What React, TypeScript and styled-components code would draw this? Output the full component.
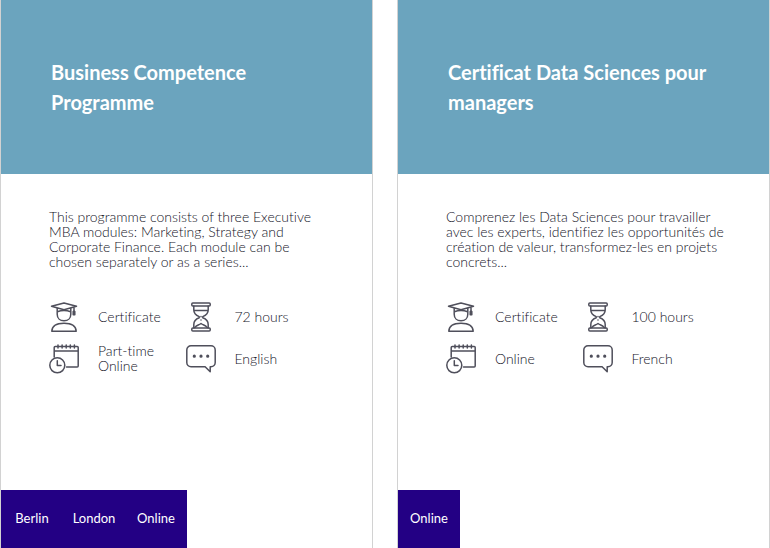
import React from "react";
import styled, { createGlobalStyle } from "styled-components";

const GlobalStyle = createGlobalStyle`
  * { box-sizing: border-box; }
  body {
    margin: 0;
    background: #fff;
    color: #14141f;
    font-family: "Lato", sans-serif;
    font-size: 14px;
    font-weight: 300;
    line-height: 15px;
    font-variant-ligatures: none;
  }
`;

const CardGrid = styled.main`
  display: grid;
  grid-template-columns: repeat(2, minmax(0, 1fr));
  gap: 24px;
  min-height: 100vh;
`;

const Card = styled.article`
  display: flex;
  flex-direction: column;
  border: solid #d2d2d2;
  border-width: 0 1px;
`;

const CardHeader = styled.header`
  min-height: 174px;
  padding: 57px 48px 57px 50px;
  background: #6ba4be;
`;

const Title = styled.h2`
  margin: 0;
  color: #fff;
  font-size: 20px;
  font-weight: 700;
  line-height: 30px;
`;

const CardBody = styled.div`
  flex: 1;
  padding: 35px 40px 24px 48px;
`;

const Summary = styled.p`
  margin: 0 0 32px;
`;

const Facts = styled.ul`
  display: grid;
  grid-template-columns: repeat(2, minmax(0, 1fr));
  gap: 10px 0;
  margin: 0 10px 0 0;
  padding: 0;
  list-style: none;
`;

const Fact = styled.li`
  display: flex;
  align-items: center;
  gap: 19px;
  min-height: 32px;
`;

const FactText = styled.span`
  padding-bottom: 2px;
  white-space: pre-line;
`;

const Icon = styled.svg`
  flex: none;
  width: 30px;
  height: 30px;
  fill: none;
  stroke: #4f4f5b;
  stroke-width: 1.5;
  stroke-linecap: round;
  stroke-linejoin: round;
`;

const Places = styled.ul`
  display: flex;
  align-self: flex-start;
  margin: 0;
  padding: 0;
  list-style: none;
  background: #230084;
  color: #fff;
  font-size: 13px;
  font-weight: 400;
`;

const Place = styled.li`
  min-width: 62px;
  padding: 0 8px 2px;
  line-height: 56px;
  text-align: center;
`;

function GraduateIcon() {
  return (
    <Icon viewBox="0 0 30 30" aria-hidden="true">
      <path d="M2.5 4.2 15 .9l12.5 3.3L15 7.8ZM8.2 6.2v6c0 4 2.8 6.6 6.8 6.6s6.8-2.6 6.8-6.6v-6M8.3 9.8c4.3-1.6 9.1-1.6 13.4 0M25 5v6.5M24.2 9.5v3.2h1.6V9.5" />
      <path d="M2.8 29.2c.2-5.4 4.2-8 12.2-8s12 2.6 12.2 8Z" />
    </Icon>
  );
}

function HourglassIcon() {
  return (
    <Icon viewBox="0 0 30 30" aria-hidden="true">
      <rect x="5.8" y=".9" width="18.4" height="3.2" rx="1" />
      <rect x="5.8" y="25.9" width="18.4" height="3.2" rx="1" />
      <path d="M7.8 4.1v4c0 4 2.3 5.3 5.4 6.5v1.2c-3.1 1.2-5.4 2.8-5.4 6.7v3.4M22.2 4.1v4c0 4-2.3 5.3-5.4 6.5v1.2c3.1 1.2 5.4 2.8 5.4 6.7v3.4M8 8.5h14M9 25.5c1.2-2.3 3.7-2.2 6-4 2.3 1.8 4.8 1.7 6 4M15 14.6v.1M15 18v.1" />
    </Icon>
  );
}

function ScheduleIcon() {
  return (
    <Icon viewBox="0 0 30 30" aria-hidden="true">
      <path d="M5.2 13V3.5q0-1 1-1h22q1 0 1 1V22q0 1-1 1H17.5M5.2 7h24M9 .9v3.2M13.1 .9v3.2M17.2 .9v3.2M21.3 .9v3.2M25.4 .9v3.2" />
      <circle cx="8.3" cy="21.3" r="7.5" />
      <path d="M8.3 16.8v4.8H12" />
    </Icon>
  );
}

function SpeechIcon() {
  return (
    <Icon viewBox="0 0 30 30" aria-hidden="true">
      <path d="M5 1.8h20a4.2 4.2 0 0 1 4.2 4.2v12.5a4.2 4.2 0 0 1-4.2 4.2h-.8v5.1l-5.1-5.1H5a4.2 4.2 0 0 1-4.2-4.2V6A4.2 4.2 0 0 1 5 1.8Z" />
      <path strokeWidth="3.2" d="M8.3 12.2h.01M15 12.2h.01M21.7 12.2h.01" />
    </Icon>
  );
}

type Programme = {
  title: string;
  summary: string;
  award: string;
  duration: string;
  formats: string[];
  language: string;
  places: string[];
};

const programmes: Programme[] = [
  {
    title: "Business Competence Programme",
    summary:
      "This programme consists of three Executive MBA modules: Marketing, Strategy and Corporate Finance. Each module can be chosen separately or as a series...",
    award: "Certificate",
    duration: "72 hours",
    formats: ["Part-time", "Online"],
    language: "English",
    places: ["Berlin", "London", "Online"],
  },
  {
    title: "Certificat Data Sciences pour managers",
    summary:
      "Comprenez les Data Sciences pour travailler avec les experts, identifiez les opportunités de création de valeur, transformez-les en projets concrets...",
    award: "Certificate",
    duration: "100 hours",
    formats: ["Online"],
    language: "French",
    places: ["Online"],
  },
];

function ProgrammeCard({ programme }: { programme: Programme }) {
  return (
    <Card>
      <CardHeader>
        <Title>{programme.title}</Title>
      </CardHeader>
      <CardBody>
        <Summary>{programme.summary}</Summary>
        <Facts>
          <Fact><GraduateIcon /><FactText>{programme.award}</FactText></Fact>
          <Fact><HourglassIcon /><FactText>{programme.duration}</FactText></Fact>
          <Fact><ScheduleIcon /><FactText>{programme.formats.join("\n")}</FactText></Fact>
          <Fact><SpeechIcon /><FactText>{programme.language}</FactText></Fact>
        </Facts>
      </CardBody>
      <Places>
        {programme.places.map((place) => <Place key={place}>{place}</Place>)}
      </Places>
    </Card>
  );
}

export default function App() {
  return (
    <>
      <GlobalStyle />
      <CardGrid>
        {programmes.map((programme) => (
          <ProgrammeCard key={programme.title} programme={programme} />
        ))}
      </CardGrid>
    </>
  );
}
